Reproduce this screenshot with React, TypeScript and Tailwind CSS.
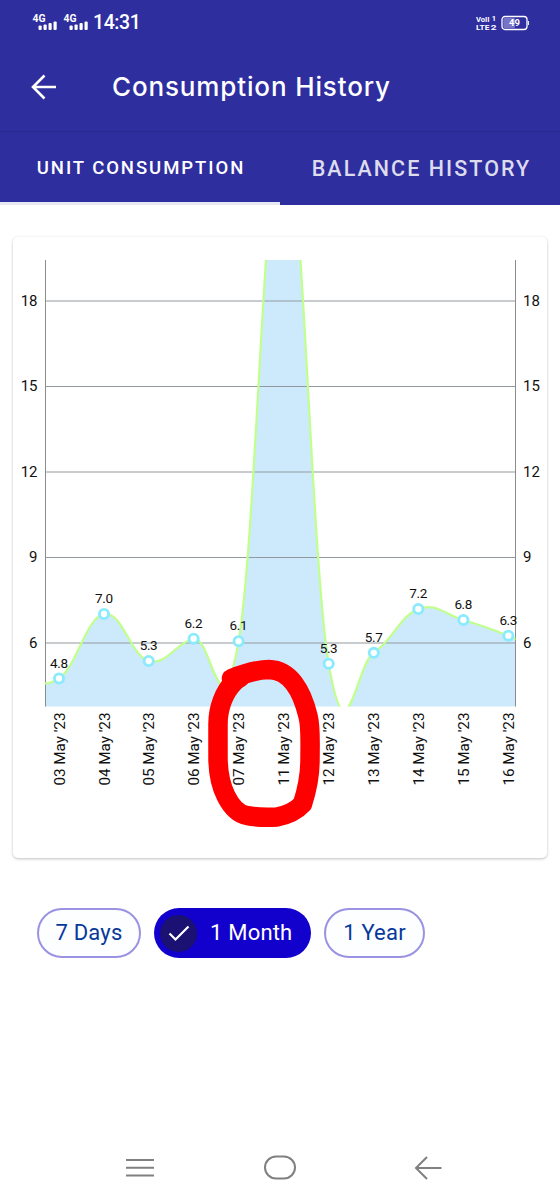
import { useState } from 'react';

interface Reading {
  date: string;
  x: number;
  y: number;
  label?: string;
}

const readings: Reading[] = [
  { date: "03 May '23", x: 59, y: 678.5, label: '4.8' },
  { date: "04 May '23", x: 104, y: 614, label: '7.0' },
  { date: "05 May '23", x: 148.7, y: 661, label: '5.3' },
  { date: "06 May '23", x: 193.6, y: 638.7, label: '6.2' },
  { date: "07 May '23", x: 238.6, y: 641.2, label: '6.1' },
  { date: "11 May '23", x: 283.5, y: 121 },
  { date: "12 May '23", x: 328.7, y: 663.7, label: '5.3' },
  { date: "13 May '23", x: 373.8, y: 652.8, label: '5.7' },
  { date: "14 May '23", x: 418.3, y: 609, label: '7.2' },
  { date: "15 May '23", x: 463.4, y: 620, label: '6.8' },
  { date: "16 May '23", x: 508.4, y: 635.7, label: '6.3' },
];

const ticks = [
  { value: 18, y: 301 },
  { value: 15, y: 386.5 },
  { value: 12, y: 472 },
  { value: 9, y: 557.5 },
  { value: 6, y: 643 },
];

// Cubic smoothing, the neighbours outside the plot only shape the two ends
const buildLine = () => {
  const pts = [
    { x: -31, y: 660 },
    { x: 14, y: 674 },
    ...readings,
    { x: 553, y: 655 },
    { x: 598, y: 660 },
  ];
  const k = 0.2;
  let d = `M${pts[1].x} ${pts[1].y}`;
  for (let i = 1; i < pts.length - 2; i++) {
    const [a, b, c, e] = [pts[i - 1], pts[i], pts[i + 1], pts[i + 2]];
    d += ` C${b.x + (c.x - a.x) * k} ${b.y + (c.y - a.y) * k} ${c.x - (e.x - b.x) * k} ${c.y - (e.y - b.y) * k} ${c.x} ${c.y}`;
  }
  return d;
};

const Signal = () => (
  <svg width="26" height="20" viewBox="0 0 26 20" fill="white">
    <text x="0.5" y="9" fontSize="10.5" fontWeight="700" textLength="13" lengthAdjust="spacingAndGlyphs">4G</text>
    <rect x="6.5" y="12.5" width="3.2" height="4.5" rx="1" />
    <rect x="11.5" y="11.5" width="3.2" height="5.5" rx="1" />
    <rect x="16.5" y="10" width="3.2" height="7" rx="1" />
    <rect x="21.5" y="8.5" width="3.2" height="8.5" rx="1" />
  </svg>
);

const StatusBar = () => (
  <div className="flex h-[46px] items-center pl-8 pr-[31px] text-white">
    <Signal />
    <div className="ml-[5px]"><Signal /></div>
    <span className="ml-[4px] w-[48px] text-[19.5px] font-medium leading-none tracking-[-0.4px]">14:31</span>
    <svg className="ml-auto" width="22" height="18" viewBox="0 0 22 18" fill="white" fontWeight="700">
      <text x="0" y="7.5" fontSize="8" textLength="13.5" lengthAdjust="spacingAndGlyphs">VoII</text>
      <text x="15.8" y="7" fontSize="7.5">1</text>
      <text x="0" y="16" fontSize="8" textLength="13.5" lengthAdjust="spacingAndGlyphs">LTE</text>
      <text x="14.8" y="16" fontSize="8" textLength="5.8" lengthAdjust="spacingAndGlyphs">2</text>
    </svg>
    <svg className="ml-[3px] -mt-px" width="28" height="16" viewBox="0 0 28 16">
      <rect x="1" y="1.5" width="25" height="13" rx="3" fill="none" stroke="white" strokeWidth="1.3" />
      <rect x="2.3" y="2.8" width="11.7" height="10.4" rx="1.5" fill="#7774c8" />
      <path d="M27.4 6v4" stroke="white" strokeWidth="1" />
      <text x="13.5" y="11.4" fontSize="9.5" fontWeight="700" textAnchor="middle" fill="white">49</text>
    </svg>
  </div>
);

const Chart = () => {
  const line = buildLine();

  return (
    <svg className="block h-[621px] w-full" viewBox="13 237 534 621" fill="none">
      <defs>
        <clipPath id="plot">
          <rect x="45" y="260" width="470.5" height="446.5" />
        </clipPath>
      </defs>

      <path d={`${line} L553 720 L14 720 Z`} fill="#cdeafd" clipPath="url(#plot)" />
      {ticks.map((t) => (
        <g key={t.value} fontSize="15" fill="#111">
          <path d={`M45 ${t.y}H515.5`} stroke="#929a9f" strokeWidth="1.1" />
          <text x="37.5" y={t.y + 4.5} textAnchor="end">{t.value}</text>
          <text x="523" y={t.y + 4.5}>{t.value}</text>
        </g>
      ))}
      <path d="M45.5 260V706.5M515.5 260V706.5" stroke="#8c8c8c" strokeWidth="1" />
      <path d={line} stroke="#c0ff8c" strokeWidth="2.2" clipPath="url(#plot)" />

      {readings.map((r) => (
        <g key={r.date} fill="#111">
          {r.label && (
            <>
              <circle cx={r.x} cy={r.y} r="4.6" fill="white" stroke="#8ceaff" strokeWidth="2.9" />
              <text x={r.x} y={r.y - 10.8} fontSize="13.5" textAnchor="middle" textLength="18">{r.label}</text>
            </>
          )}
          <text
            fontSize="15.3"
            textLength="73"
            transform={`translate(${r.x + 5.6} 785.5) rotate(-90)`}
          >
            {r.date}
          </text>
        </g>
      ))}

      {/* Hand-drawn marker round the missing days */}
      <path
        d="M231.5 678.5C243 674 258 669.5 269 669.5C290 670 302 691 308 716C311 727 310 742 310 760C310 776 307 790 302.5 804C297 810 287 815 277 817C266 817.5 256 817.5 247 815.5C238 814 231 806 226 796C220 784 218 770 218 757V724C218 708 224 692 234 682Q237 679 241 677"
        stroke="#fe0000"
        strokeWidth="19.5"
        strokeLinecap="round"
        strokeLinejoin="round"
      />
    </svg>
  );
};

export default function App() {
  const [tab, setTab] = useState('unit');

  return (
    <div className="flex h-[1200px] w-[560px] flex-col overflow-hidden bg-white font-['Roboto',sans-serif]">
      <header className="h-[205px] bg-[#2f2e9f]">
        <StatusBar />
        <div className="flex h-[86px] items-center border-b border-[#2a298f] pb-[4px] pl-[31px] text-white">
          <svg width="26" height="26" viewBox="0 0 26 26" fill="none" stroke="white" strokeWidth="2.6">
            <path d="M25 13H2M13.5 1.5L2 13L13.5 24.5" />
          </svg>
          <h1 className="ml-[55px] whitespace-nowrap font-['Inter',sans-serif] text-[26px] font-medium tracking-[0.86px]">
            Consumption History
          </h1>
        </div>
        <div className="grid h-[73px] grid-cols-2 whitespace-nowrap">
          <button
            onClick={() => setTab('unit')}
            className={`border-b-[3px] pl-[2px] pt-[4px] text-[18.5px] font-medium tracking-[1.95px] text-white ${tab === 'unit' ? 'border-[#e8e8f4]' : 'border-transparent'}`}
          >
            UNIT CONSUMPTION
          </button>
          <button
            onClick={() => setTab('balance')}
            className={`border-b-[3px] pl-[3px] pt-[5px] text-[21.5px] font-medium tracking-[2.05px] text-[#dcdcec] ${tab === 'balance' ? 'border-[#e8e8f4]' : 'border-transparent'}`}
          >
            BALANCE HISTORY
          </button>
        </div>
      </header>

      <main className="flex-1 px-[13px] pt-8">
        <section className="overflow-hidden rounded-[5px] bg-white shadow-[0_1px_3px_rgba(0,0,0,0.25)]">
          <Chart />
        </section>

        <div className="mt-[50px] flex gap-[13px] pl-6 text-[22px] tracking-[0.2px] text-[#08389b]">
          <button className="h-[50px] w-[104px] rounded-full border-2 border-[#9a92e2] bg-[#fcfeff] pb-[2px]">7 Days</button>
          <button className="flex h-[50px] w-[157px] items-center rounded-full bg-[#1200cc] pl-[6px] text-white">
            <span className="flex size-[37px] items-center justify-center rounded-full bg-[#1a1172]">
              <svg width="22" height="18" viewBox="0 0 22 18" fill="none" stroke="white" strokeWidth="2.2">
                <path d="M1.5 9.5L7.5 15.5L20.5 2.5" />
              </svg>
            </span>
            <span className="ml-[13px] pb-[2px]">1 Month</span>
          </button>
          <button className="h-[50px] w-[101px] rounded-full border-2 border-[#9a92e2] bg-[#fcfeff] pb-[2px]">1 Year</button>
        </div>
      </main>

      <nav className="flex h-[65px] items-center pl-[126px]">
        <svg width="28" height="20" viewBox="0 0 28 20" stroke="#808080" strokeWidth="2">
          <path d="M0 2H28M0 9.7H28M0 17.5H28" />
        </svg>
        <svg className="ml-[109px]" width="34" height="26" viewBox="0 0 34 26" fill="none" stroke="#808080" strokeWidth="2">
          <rect x="2" y="1.5" width="30" height="22" rx="11" />
        </svg>
        <svg className="ml-[117px]" width="28" height="24" viewBox="0 0 28 24" fill="none" stroke="#808080" strokeWidth="2">
          <path d="M27.5 12H2M13 1L2 12L13 23" />
        </svg>
      </nav>
    </div>
  );
}
